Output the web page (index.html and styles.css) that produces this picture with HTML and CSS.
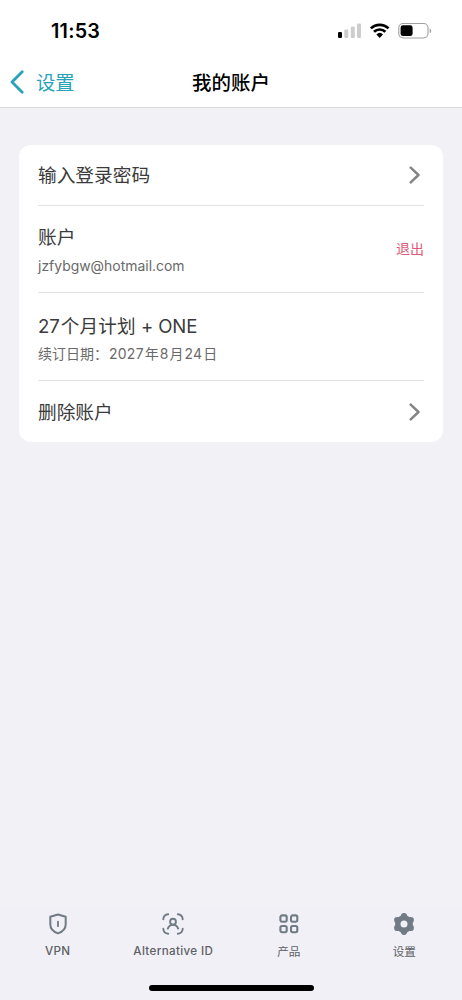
FILE: index.html
```html
<!DOCTYPE html>
<html lang="zh-CN">
<head>
<meta charset="utf-8">
<title>我的账户</title>
<link rel="stylesheet" href="styles.css">
</head>
<body>
<div class="screen">
  <header class="header">
    <div class="status">
      <span class="time">11:53</span>
      <svg class="status-icons" width="96" height="18" viewBox="0 0 96 18">
        <rect x="1" y="10" width="4" height="6" rx="1.2" fill="#000"/>
        <g fill="#cdcdcd"><rect x="7.3" y="7.5" width="4" height="8.5" rx="1.2"/><rect x="13.8" y="4.5" width="4" height="11.5" rx="1.2"/><rect x="20" y="1.5" width="4" height="14.5" rx="1.2"/></g>
        <g fill="none" stroke="#000" stroke-width="2.7"><path d="M33.9 6.4a12.6 12.6 0 0 1 17.6 0"/><path d="M37 9.8a8.2 8.2 0 0 1 11.4 0"/></g>
        <path d="M39.4 12.4a4.8 4.8 0 0 1 6.6 0L42.7 16z" fill="#000"/>
        <rect x="61.8" y="1.5" width="29.2" height="14.5" rx="4.4" fill="none" stroke="#a0a0a0" stroke-width="1.1"/>
        <rect x="63.6" y="3.3" width="12" height="10.8" rx="2.4" fill="#000"/>
        <path d="M92.7 6.4c2 .7 2 4 0 4.7z" fill="#a0a0a0"/>
      </svg>
    </div>
    <nav class="navbar">
      <a class="back"><svg width="14" height="24" viewBox="0 0 14 24"><path d="M12.2 1.7 2 12l10.2 10.2" fill="none" stroke="#27a2b8" stroke-width="2.8" stroke-linecap="round" stroke-linejoin="round"/></svg><span>设置</span></a>
      <h1 class="title">我的账户</h1>
    </nav>
  </header>
  <main class="content">
    <section class="card">
      <div class="row">
        <span class="label">输入登录密码</span>
        <svg class="chevron" width="12" height="18" viewBox="0 0 12 18"><path d="m1.7 1.7 7.8 7.3-7.8 7.3" fill="none" stroke="#858585" stroke-width="2.5" stroke-linecap="round" stroke-linejoin="round"/></svg>
      </div>
      <div class="row tall">
        <div class="stack"><span class="label">账户</span><span class="sub email">jzfybgw@hotmail.com</span></div>
        <span class="logout">退出</span>
      </div>
      <div class="row tall">
        <div class="stack"><span class="label plan">27<span class="cjk">个月计划</span> + ONE</span><span class="sub date">续订日期：<span class="digits">2027</span>年<span class="digits">8</span>月<span class="digits">24</span>日</span></div>
      </div>
      <div class="row last">
        <span class="label">删除账户</span>
        <svg class="chevron" width="12" height="18" viewBox="0 0 12 18"><path d="m1.7 1.7 7.8 7.3-7.8 7.3" fill="none" stroke="#858585" stroke-width="2.5" stroke-linecap="round" stroke-linejoin="round"/></svg>
      </div>
    </section>
  </main>
  <footer class="footer">
    <div class="tabs">
      <div class="tab"><svg width="24" height="24" viewBox="0 0 24 24" fill="none" stroke="#707b85" stroke-width="2" stroke-linejoin="round" stroke-linecap="round"><path d="m12 2.5 7.7 2.3v7.4c0 4.3-2.9 7.5-7.7 9.2-4.8-1.7-7.7-4.9-7.7-9.2V4.8z"/><path d="M12 9.6v4.6" stroke-width="1.8"/></svg><span>VPN</span></div>
      <div class="tab"><svg width="24" height="24" viewBox="0 0 24 24" fill="none" stroke="#707b85" stroke-width="1.9" stroke-linecap="round"><path d="M2.3 7.2C2.5 4.2 4.3 2.5 7.2 2.3M16.8 2.3c2.9.2 4.7 1.9 4.9 4.9M2.3 16.8c.2 2.9 2 4.7 4.9 4.9M16.8 21.7c2.9-.2 4.7-2 4.9-4.9"/><circle cx="12" cy="9.7" r="2.9"/><path d="M6.8 16.6c1-2.6 2.9-3.9 5.2-3.9s4.2 1.3 5.2 3.9"/></svg><span>Alternative ID</span></div>
      <div class="tab"><svg width="24" height="24" viewBox="0 0 24 24" fill="none" stroke="#707b85" stroke-width="2.1"><rect x="3.4" y="3.4" width="6.3" height="6.3" rx="1.7"/><rect x="14" y="3.4" width="6.3" height="6.3" rx="1.7"/><rect x="3.4" y="14" width="6.3" height="6.3" rx="1.7"/><rect x="14" y="14" width="6.3" height="6.3" rx="1.7"/></svg><span class="zh">产品</span></div>
      <div class="tab"><svg width="24" height="24" viewBox="0 0 24 24"><circle cx="12" cy="12" r="6.2" fill="none" stroke="#707b85" stroke-width="5.4"/><g fill="#707b85"><circle cx="12" cy="4.2" r="3.1"/><circle cx="12" cy="19.8" r="3.1"/><circle cx="18.8" cy="8.1" r="3.1"/><circle cx="18.8" cy="15.9" r="3.1"/><circle cx="5.2" cy="8.1" r="3.1"/><circle cx="5.2" cy="15.9" r="3.1"/></g></svg><span class="zh">设置</span></div>
    </div>
    <div class="home"></div>
  </footer>
</div>
</body>
</html>
```
FILE: styles.css
```css
* { box-sizing: border-box; }
body { margin: 0; background: #f2f1f6; color: #3a3a3a; font-family: Inter, "Noto Sans CJK SC", sans-serif; }
.screen { width: 462px; height: 1000px; display: flex; flex-direction: column; }
.header { height: 108px; background: #fff; border-bottom: 1px solid #d9d9dd; }
.status { height: 57px; padding: 5px 29px 0 51px; display: flex; justify-content: space-between; align-items: center; color: #000; }
.time { font-size: 19.8px; font-weight: 600; line-height: 24px; letter-spacing: .2px; }
.status-icons { display: block; margin-top: -1px; }
.navbar { height: 50px; display: grid; grid-template-columns: 1fr auto 1fr; align-items: center; padding: 0 10px; }
.back { display: flex; align-items: center; gap: 12px; color: #27a2b8; font-size: 19.3px; line-height: 28px; }
.back span { padding-top: 2px; }
.title { margin: 0; padding-top: 1px; color: #000; font-size: 19.5px; line-height: 28px; font-weight: 500; }
.content { flex: 1; padding: 36.5px 19px 0; }
.card { height: 297.5px; border-radius: 12px; background: #fff; padding: 0 19px; }
.row { height: 61px; display: flex; align-items: center; justify-content: space-between; border-bottom: 1px solid #e1e3e5; }
.row > .label { padding-top: 3px; }
.tall { height: 87.5px; }
.last { border: 0; }
.stack { display: flex; flex-direction: column; gap: 1px; padding-top: 6px; }
.label { font-size: 18.7px; line-height: 28px; }
.plan { font-size: 18.6px; letter-spacing: -.12px; }
.cjk { letter-spacing: .2px; margin-left: 1px; }
.sub { color: #696969; font-size: 14px; line-height: 26px; }
.email { font-size: 13.95px; }
.date { letter-spacing: 0; }
.digits { letter-spacing: .3px; margin: 0 .9px; }
.logout { color: #df5b7b; font-size: 14px; line-height: 20px; padding-top: 1px; }
.chevron { margin-right: 3px; margin-top: 1px; }
.footer { height: 94px; background: #f1f0f6; display: flex; flex-direction: column; align-items: center; }
.tabs { width: 100%; height: 79px; display: grid; grid-template-columns: repeat(4, 1fr); }
.tab { padding-top: 6px; display: flex; flex-direction: column; align-items: center; gap: 6px; color: #5d6065; font-size: 11.6px; font-weight: 500; line-height: 18px; letter-spacing: .35px; }
.zh { letter-spacing: 0; font-weight: 400; padding-top: 1px; }
.home { width: 165px; height: 6px; border-radius: 3px; background: #000; }
```
